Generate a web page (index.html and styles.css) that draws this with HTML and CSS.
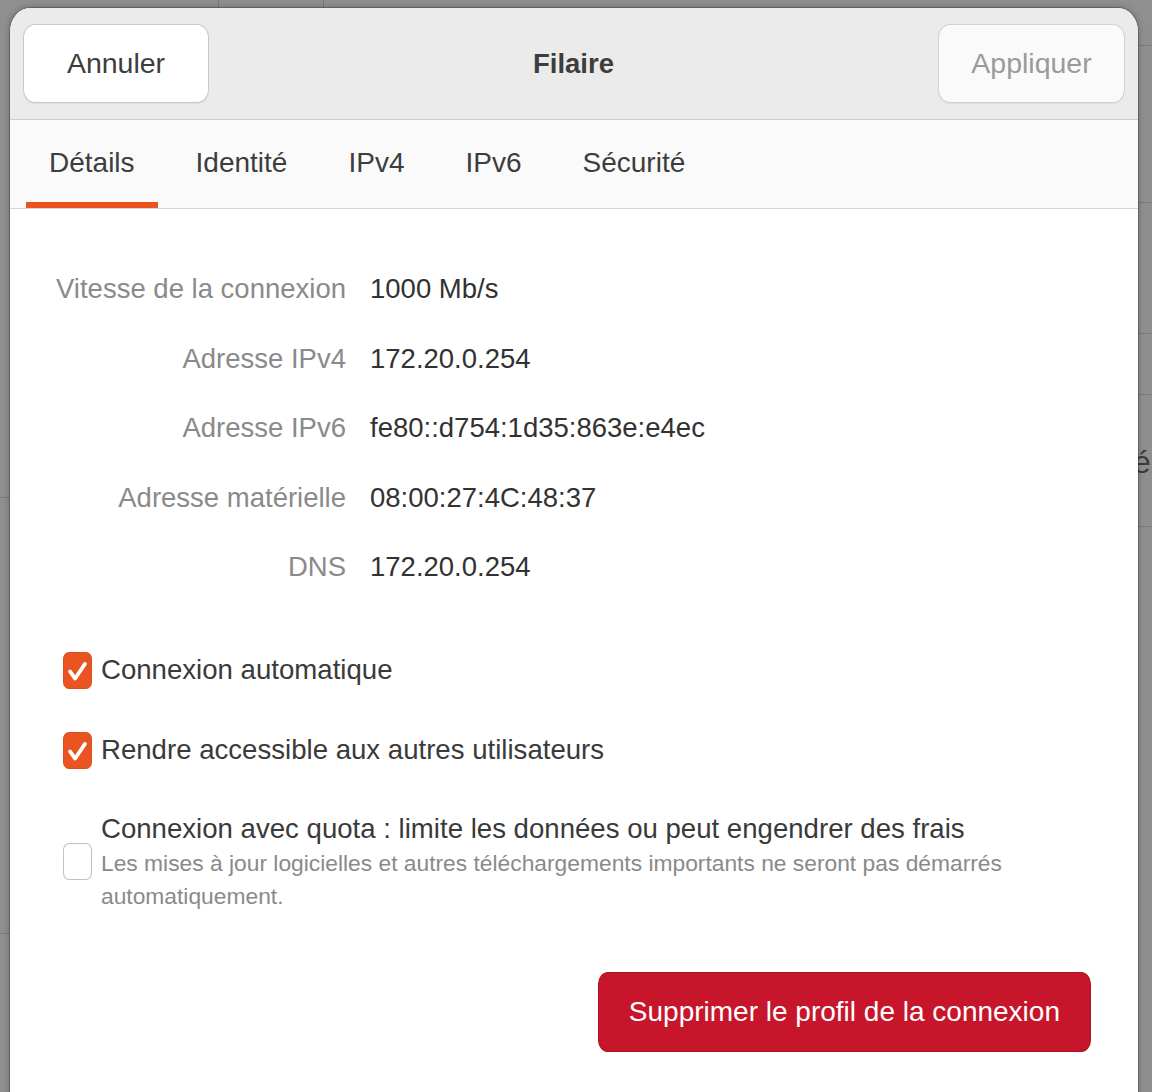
FILE: index.html
```html
<!DOCTYPE html>
<html lang="fr">
<head>
<meta charset="utf-8">
<title>Filaire</title>
<link rel="stylesheet" href="styles.css">
</head>
<body>
<div class="backdrop" aria-hidden="true"><span class="backdrop-text">é</span></div>
<div class="dialog">
  <header class="headerbar">
    <button class="btn">Annuler</button>
    <h1 class="title">Filaire</h1>
    <button class="btn btn-disabled">Appliquer</button>
  </header>
  <nav class="tabs">
    <div class="tab active">Détails</div>
    <div class="tab">Identité</div>
    <div class="tab">IPv4</div>
    <div class="tab">IPv6</div>
    <div class="tab">Sécurité</div>
  </nav>
  <main class="content">
    <dl class="details">
      <dt>Vitesse de la connexion</dt><dd>1000 Mb/s</dd>
      <dt>Adresse IPv4</dt><dd>172.20.0.254</dd>
      <dt>Adresse IPv6</dt><dd>fe80::d754:1d35:863e:e4ec</dd>
      <dt>Adresse matérielle</dt><dd>08:00:27:4C:48:37</dd>
      <dt>DNS</dt><dd>172.20.0.254</dd>
    </dl>
    <div class="checks">
      <div class="check">
        <span class="box checked"><svg viewBox="0 0 29 37" preserveAspectRatio="none"><path d="M6.5 19.5 L12 27 L22.5 11.5" /></svg></span>
        <span class="check-title">Connexion automatique</span>
      </div>
      <div class="check">
        <span class="box checked"><svg viewBox="0 0 29 37" preserveAspectRatio="none"><path d="M6.5 19.5 L12 27 L22.5 11.5" /></svg></span>
        <span class="check-title">Rendre accessible aux autres utilisateurs</span>
      </div>
      <div class="check check-multi">
        <span class="box"></span>
        <div class="check-text">
          <div class="check-title">Connexion avec quota&nbsp;: limite les données ou peut engendrer des frais</div>
          <div class="check-sub">Les mises à jour logicielles et autres téléchargements importants ne seront pas démarrés automatiquement.</div>
        </div>
      </div>
    </div>
    <div class="actions">
      <button class="btn-danger">Supprimer le profil de la connexion</button>
    </div>
  </main>
</div>
</body>
</html>
```

FILE: styles.css
```css
* {
  box-sizing: border-box;
  margin: 0;
  padding: 0;
}

html,
body {
  width: 1152px;
  height: 1092px;
  overflow: hidden;
}

body {
  position: relative;
  background-color: #8f8f8f;
  font-family: "Liberation Sans", Arial, sans-serif;
  color: #3d3d3d;
}

.backdrop {
  position: absolute;
  inset: 0;
  background-image:
    linear-gradient(#787878, #787878),
    linear-gradient(#787878, #787878),
    linear-gradient(#7a7a7a, #7a7a7a),
    linear-gradient(#7a7a7a, #7a7a7a),
    linear-gradient(#7a7a7a, #7a7a7a),
    linear-gradient(#7a7a7a, #7a7a7a),
    linear-gradient(#7a7a7a, #7a7a7a),
    linear-gradient(#7a7a7a, #7a7a7a),
    linear-gradient(#7a7a7a, #7a7a7a);
  background-repeat: no-repeat;
  background-size:
    1px 12px,
    1px 12px,
    12px 1px,
    12px 1px,
    16px 1px,
    16px 1px,
    16px 1px,
    16px 1px,
    16px 1px;
  background-position:
    218px 0,
    323px 0,
    0 497px,
    0 933px,
    1136px 45px,
    1136px 202px,
    1136px 333px,
    1136px 394px,
    1136px 526px;
}

.backdrop-text {
  position: absolute;
  left: 1133px;
  top: 442px;
  font-size: 32px;
  line-height: 40px;
  color: #3c3c3c;
}

.dialog {
  position: absolute;
  left: 10px;
  top: 8px;
  width: 1128px;
  height: 1110px;
  display: flex;
  flex-direction: column;
  background: #ffffff;
  border-radius: 20px 20px 0 0 / 24px 24px 0 0;
  overflow: hidden;
  box-shadow: 0 0 0 1px rgba(0, 0, 0, 0.22), 0 0 6px 1px rgba(0, 0, 0, 0.22);
}

/* Header bar */
.headerbar {
  flex: none;
  height: 112px;
  display: flex;
  align-items: flex-start;
  padding: 16px 13px 0 13px;
  background: #ebebeb;
  border-bottom: 1px solid #cdcdcd;
}

.btn {
  flex: none;
  width: 186px;
  height: 79px;
  border: 1px solid #c8c8c8;
  border-radius: 12px / 14px;
  background: #ffffff;
  font-family: inherit;
  font-size: 28.5px;
  color: #3d3d3d;
  box-shadow: 0 1px 1px rgba(0, 0, 0, 0.05);
}

.btn-disabled {
  width: 187px;
  background: #fafafa;
  border-color: #d2d2d2;
  color: #9a9a9a;
}

.title {
  flex: 1;
  text-align: center;
  font-size: 27.5px;
  font-weight: bold;
  line-height: 79px;
  color: #3d3d3d;
}

/* Tabs */
.tabs {
  flex: none;
  height: 89px;
  display: flex;
  gap: 15px;
  padding-left: 16px;
  background: #fafafa;
  border-bottom: 1px solid #d6d6d6;
}

.tab {
  height: 88px;
  display: flex;
  align-items: center;
  padding: 4px 23px 0;
  font-size: 28px;
  color: #3d3d3d;
  border-bottom: 6px solid transparent;
}

.tab.active {
  border-bottom-color: #e95420;
}

/* Content */
.content {
  flex: 1;
  display: flex;
  flex-direction: column;
  padding: 60px 47px 0 46px;
  background: #ffffff;
}

.details {
  display: grid;
  grid-template-columns: 290px 1fr;
  column-gap: 24px;
  row-gap: 29.5px;
  font-size: 27.5px;
  line-height: 40px;
}

.details dt {
  text-align: right;
  white-space: nowrap;
  color: #8a8a8a;
}

.details dd {
  color: #323232;
}

.checks {
  margin-top: 63px;
  display: flex;
  flex-direction: column;
  gap: 40px;
}

.check {
  display: flex;
  align-items: center;
  gap: 9px;
  padding-left: 7px;
  font-size: 27.6px;
  line-height: 40px;
  color: #3a3a3a;
}

.box {
  flex: none;
  width: 29px;
  height: 37px;
  border-radius: 6px / 7px;
  background: #ffffff;
  border: 1.5px solid #c2c2c2;
}

.box.checked {
  background: #e95420;
  border-color: #d9501e;
}

.box svg {
  display: block;
  width: 100%;
  height: 100%;
}

.box path {
  fill: none;
  stroke: #ffffff;
  stroke-width: 4;
  stroke-linecap: round;
  stroke-linejoin: round;
}

.check-multi .check-title {
  line-height: 37px;
}

.check-sub {
  font-size: 22.8px;
  line-height: 33px;
  color: #8a8a8a;
}

.actions {
  margin-top: 59px;
  display: flex;
  justify-content: flex-end;
}

.btn-danger {
  height: 80px;
  padding: 0 30px;
  border: 1px solid #a9121f;
  border-radius: 10px / 12px;
  background: #c7162b;
  font-family: inherit;
  font-size: 28px;
  color: #ffffff;
}
```
